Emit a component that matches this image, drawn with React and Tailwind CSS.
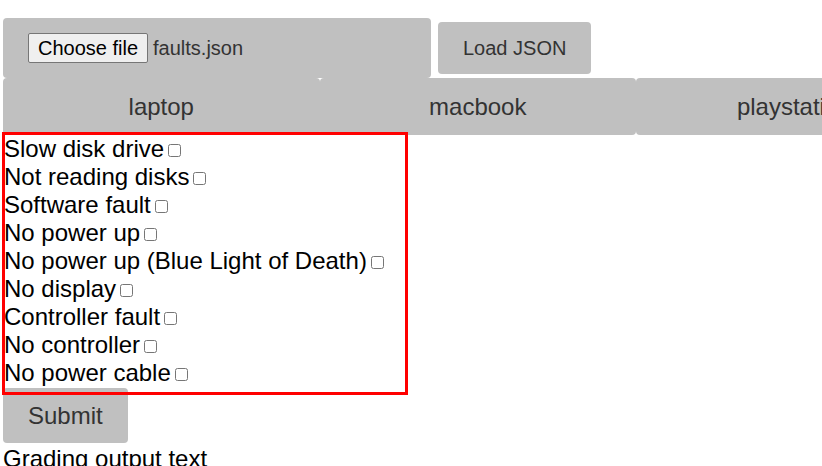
import { useState } from 'react';

const faults = [
  'Slow disk drive',
  'Not reading disks',
  'Software fault',
  'No power up',
  'No power up (Blue Light of Death)',
  'No display',
  'Controller fault',
  'No controller',
  'No power cable',
];

const devices = ['laptop', 'macbook', 'playstation'];

export default function App() {
  const [checked, setChecked] = useState({});

  return (
    <div className="min-h-[466px] overflow-hidden bg-white font-['Liberation_Sans',Arial,sans-serif] text-black">
      {/* File picker row */}
      <div className="flex items-center gap-[7px] pl-[3px] pt-[18px]">
        <div className="flex h-[60px] w-[428px] items-center rounded-[4px] bg-[#c0c0c0] pl-[25px]">
          <button className="h-[30px] rounded-[2px] border border-[#767676] bg-[#efefef] px-[9px] text-[20px] leading-[23px] text-black">
            Choose file
          </button>
          <span className="ml-[5px] text-[20px] text-[#333]">faults.json</span>
        </div>
        <button className="h-[52px] rounded-[4px] bg-[#c0c0c0] px-[25px] text-[20px] text-[#333]">
          Load JSON
        </button>
      </div>

      {/* Device tabs */}
      <div className="flex pl-[3px]">
        {devices.map(d => (
          <button
            key={d}
            className="h-[57px] w-[316.5px] shrink-0 rounded-[4px] bg-[#c0c0c0] text-[24px] text-[#333]"
          >
            {d}
          </button>
        ))}
      </div>

      {/* Fault checklist */}
      <div className="ml-[5px] mt-[2px] w-[400px] pb-[5px] outline-3 outline-[#ff0000]">
        <div className="-ml-[1px] -mt-[2px]">
          {faults.map(f => (
            <label key={f} className="block text-[24px] leading-[28px]">
              {f}
              <input
                type="checkbox"
                checked={!!checked[f]}
                onChange={e => setChecked(c => ({ ...c, [f]: e.target.checked }))}
                className="mb-[1px] ml-1 mr-[3px] h-[13px] w-[13px]"
              />
            </label>
          ))}
        </div>
      </div>

      <button className="ml-[3px] -mt-[4px] rounded-[4px] bg-[#c0c0c0] px-[25px] py-[14px] text-[24px] leading-[27px] text-[#333]">
        Submit
      </button>

      <p className="mt-[2px] pl-[3px] text-[24px] leading-[28px]">Grading output text</p>
    </div>
  );
}
